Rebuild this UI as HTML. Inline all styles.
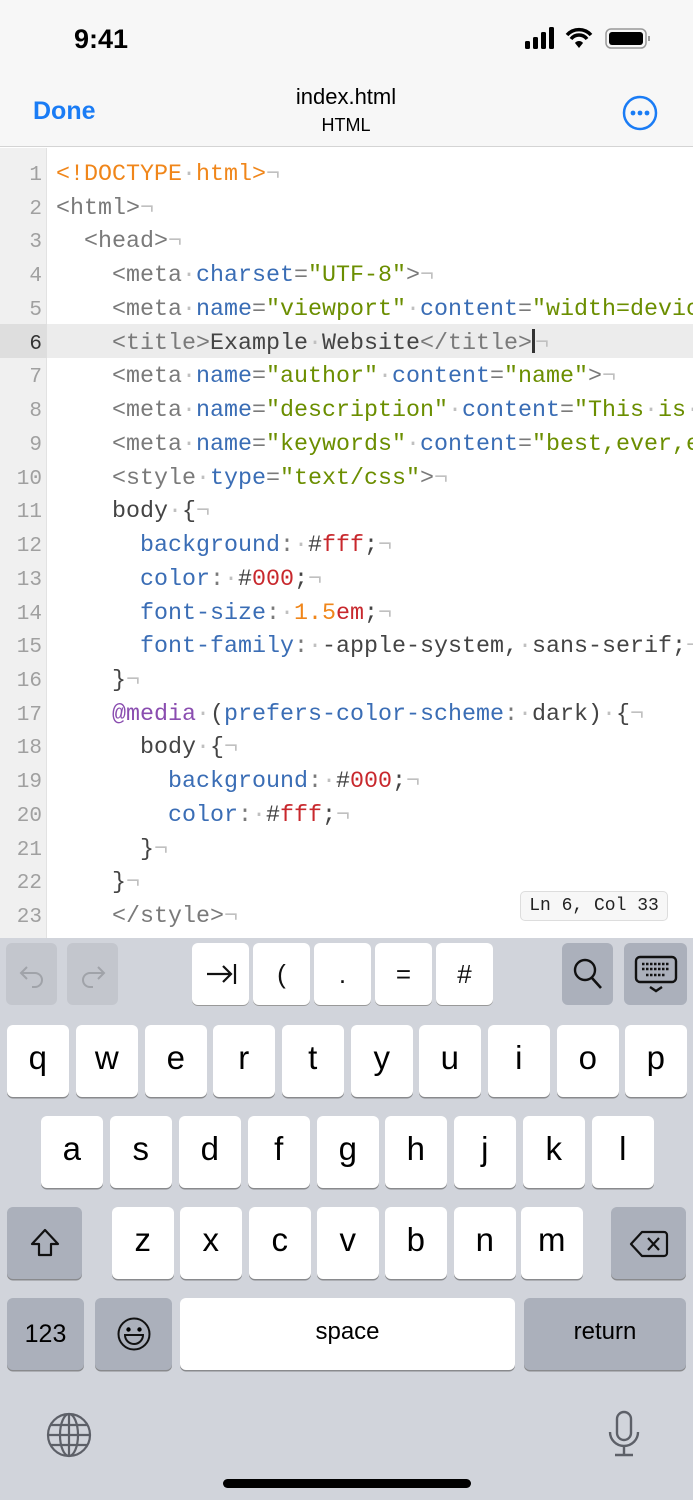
<!DOCTYPE html>
<html><head><meta charset="utf-8">
<style>
*{margin:0;padding:0;box-sizing:border-box}
body{width:693px;height:1500px;overflow:hidden;background:#fff;font-family:"Liberation Sans",sans-serif;position:relative}
.abs{position:absolute}
#top{left:0;top:0;width:693px;height:147px;background:#f7f7f7;border-bottom:1px solid #d4d4d4}
#gut{left:0;top:148px;width:47px;height:790px;background:#f0f0f0;border-right:1px solid #e2e2e2}
.cur{left:47px;top:324px;width:646px;height:34px;background:#ececec}
.curg{left:0;top:324px;width:47px;height:34px;background:#dedede}
.ln{position:absolute;left:0;width:42px;text-align:right;font-family:"Liberation Mono",monospace;font-size:21px;color:#a0a0a0;line-height:33.73px}
.code{position:absolute;left:56px;font-family:"Liberation Mono",monospace;font-size:23.33px;line-height:33.73px;white-space:pre;color:#7a7a7a}
.d{color:#c0c0c0}.n{color:#c0c0c0}
.a{color:#3a6db5}.s{color:#6b8e00}.o{color:#f0861a}.r{color:#c8282d}.p{color:#8a4db0}.k{color:#444}
#kb{left:0;top:938px;width:693px;height:562px;background:#d1d4db}
.key{position:absolute;background:#fff;border-radius:6px;box-shadow:0 1.5px 0 #898a8d;font-size:33px;color:#000;text-align:center;line-height:66px;height:72px;width:61.5px}
.key.g{background:#abb0bb}
.tb{position:absolute;top:943px;height:62px;width:57px;background:#fff;border-radius:6px;box-shadow:0 1px 0 #999;text-align:center;line-height:62px;font-size:26px;color:#111}
.tb.g{background:#abb0bb}
</style></head><body>
<div id="top" class="abs"></div>
<div class="abs" style="left:74px;top:24px;font-size:27px;font-weight:bold;color:#000">9:41</div>
<svg class="abs" style="left:520px;top:26px" width="135" height="26" viewBox="0 0 135 26">
<rect x="5" y="15" width="5" height="8" rx="1.5"/><rect x="13" y="11" width="5" height="12" rx="1.5"/><rect x="21" y="6" width="5" height="17" rx="1.5"/><rect x="29" y="1" width="5" height="22" rx="1.5"/>
<path d="M47 9 a16 16 0 0 1 24 0" stroke="#000" stroke-width="3.5" fill="none"/><path d="M51 13 a10 10 0 0 1 16 0" stroke="#000" stroke-width="3.5" fill="none"/><path d="M55 17 l4 5 l4 -5 a5 5 0 0 0 -8 0z"/>
<rect x="86" y="3" width="40" height="19" rx="5" fill="none" stroke="#999" stroke-width="1.5"/><rect x="89" y="6" width="34" height="13" rx="3"/><rect x="128" y="10" width="2" height="5" fill="#999"/>
</svg>
<div class="abs" style="left:33px;top:97px;font-size:25px;font-weight:bold;color:#1a7cf5">Done</div>
<div class="abs" style="left:246px;top:84px;width:200px;text-align:center;font-size:22px;color:#000">index.html</div>
<div class="abs" style="left:246px;top:115px;width:200px;text-align:center;font-size:18px;color:#000">HTML</div>
<svg class="abs" style="left:621px;top:94px" width="38" height="38"><circle cx="19" cy="19" r="16" fill="none" stroke="#1a7cf5" stroke-width="2.5"/><circle cx="12" cy="19" r="2.4" fill="#1a7cf5"/><circle cx="19" cy="19" r="2.4" fill="#1a7cf5"/><circle cx="26" cy="19" r="2.4" fill="#1a7cf5"/></svg>
<div id="gut" class="abs"></div>
<div class="abs cur"></div><div class="abs curg"></div>
<div class="abs" style="left:0;top:159px;width:693px;height:779px;overflow:hidden">
<div class="ln" style="top:0">1<br>2<br>3<br>4<br>5<br><span style="color:#333">6</span><br>7<br>8<br>9<br>10<br>11<br>12<br>13<br>14<br>15<br>16<br>17<br>18<br>19<br>20<br>21<br>22<br>23</div>
<div class="code" style="top:0"><span class="o">&lt;!DOCTYPE<span class="d">·</span>html&gt;</span><span class="n">¬</span>
&lt;html&gt;<span class="n">¬</span>
  &lt;head&gt;<span class="n">¬</span>
    &lt;meta<span class="d">·</span><span class="a">charset</span>=<span class="s">"UTF-8"</span>&gt;<span class="n">¬</span>
    &lt;meta<span class="d">·</span><span class="a">name</span>=<span class="s">"viewport"</span><span class="d">·</span><span class="a">content</span>=<span class="s">"width=device-width"</span>
    &lt;title&gt;<span class="k">Example<span class="d">·</span>Website</span>&lt;/title&gt;<span style="display:inline-block;width:3px;height:24px;background:#333;vertical-align:-4px"></span><span class="n">¬</span>
    &lt;meta<span class="d">·</span><span class="a">name</span>=<span class="s">"author"</span><span class="d">·</span><span class="a">content</span>=<span class="s">"name"</span>&gt;<span class="n">¬</span>
    &lt;meta<span class="d">·</span><span class="a">name</span>=<span class="s">"description"</span><span class="d">·</span><span class="a">content</span>=<span class="s">"This<span class="d">·</span>is<span class="d">·</span>a"</span>
    &lt;meta<span class="d">·</span><span class="a">name</span>=<span class="s">"keywords"</span><span class="d">·</span><span class="a">content</span>=<span class="s">"best,ever,example"</span>
    &lt;style<span class="d">·</span><span class="a">type</span>=<span class="s">"text/css"</span>&gt;<span class="n">¬</span>
    <span class="k">body</span><span class="d">·</span><span class="k">{</span><span class="n">¬</span>
      <span class="a">background</span>:<span class="d">·</span><span class="k">#</span><span class="r">fff</span><span class="k">;</span><span class="n">¬</span>
      <span class="a">color</span>:<span class="d">·</span><span class="k">#</span><span class="r">000</span><span class="k">;</span><span class="n">¬</span>
      <span class="a">font-size</span>:<span class="d">·</span><span class="o">1.5</span><span class="r">em</span><span class="k">;</span><span class="n">¬</span>
      <span class="a">font-family</span>:<span class="d">·</span><span class="k">-apple-system,</span><span class="d">·</span><span class="k">sans-serif;</span><span class="n">¬</span>
    <span class="k">}</span><span class="n">¬</span>
    <span class="p">@media</span><span class="d">·</span><span class="k">(</span><span class="a">prefers-color-scheme</span>:<span class="d">·</span><span class="k">dark)</span><span class="d">·</span><span class="k">{</span><span class="n">¬</span>
      <span class="k">body</span><span class="d">·</span><span class="k">{</span><span class="n">¬</span>
        <span class="a">background</span>:<span class="d">·</span><span class="k">#</span><span class="r">000</span><span class="k">;</span><span class="n">¬</span>
        <span class="a">color</span>:<span class="d">·</span><span class="k">#</span><span class="r">fff</span><span class="k">;</span><span class="n">¬</span>
      <span class="k">}</span><span class="n">¬</span>
    <span class="k">}</span><span class="n">¬</span>
    &lt;/style&gt;<span class="n">¬</span></div>
</div>
<div class="abs" style="left:520px;top:891px;width:148px;height:30px;background:#f7f7f7;border:1px solid #ddd;border-radius:5px;font-family:'Liberation Mono',monospace;font-size:18px;line-height:28px;text-align:center;color:#222">Ln 6, Col 33</div>
<div id="kb" class="abs"></div>
<div class="tb" style="left:6px;width:51px;background:#c3c6cd;box-shadow:none"><svg width="30" height="30" viewBox="0 0 30 30" style="margin-top:16px"><path d="M10 8 L4 14 L10 20 M4 14 H18 a7 7 0 0 1 0 14 H15" stroke="#a0a3a9" stroke-width="2" fill="none"/></svg></div>
<div class="tb" style="left:67px;width:51px;background:#c3c6cd;box-shadow:none"><svg width="30" height="30" viewBox="0 0 30 30" style="margin-top:16px"><path d="M20 8 L26 14 L20 20 M26 14 H12 a7 7 0 0 0 0 14 H15" stroke="#a0a3a9" stroke-width="2" fill="none"/></svg></div>
<div class="tb" style="left:192px"><svg width="34" height="30" viewBox="0 0 34 30" style="margin-top:16px"><path d="M3 15 H27 M19 7 L27 15 L19 23 M31 5 V25" stroke="#111" stroke-width="2.2" fill="none"/></svg></div>
<div class="tb" style="left:253px">(</div>
<div class="tb" style="left:314px">.</div>
<div class="tb" style="left:375px">=</div>
<div class="tb" style="left:436px">#</div>
<div class="tb g" style="left:562px;width:51px;box-shadow:none"><svg width="32" height="34" viewBox="0 0 32 34" style="margin-top:14px"><circle cx="13" cy="13" r="10" fill="none" stroke="#111" stroke-width="2.4"/><path d="M20 21 L29 31" stroke="#111" stroke-width="2.6"/></svg></div>
<div class="tb g" style="left:624px;width:63px;box-shadow:none"><svg width="46" height="40" viewBox="0 0 46 40" style="margin-top:12px"><rect x="3" y="2" width="40" height="25" rx="4" fill="none" stroke="#111" stroke-width="2.4"/><path d="M9 9h28M9 14h28M13 20h20" stroke="#111" stroke-width="2.6" stroke-dasharray="2.5 1.5"/><path d="M17 32 L23 36 L29 32" stroke="#111" stroke-width="2.4" fill="none"/></svg></div>
<div class="key" style="left:7px;top:1025px">q</div><div class="key" style="left:76px;top:1025px">w</div><div class="key" style="left:145px;top:1025px">e</div><div class="key" style="left:213px;top:1025px">r</div><div class="key" style="left:282px;top:1025px">t</div><div class="key" style="left:351px;top:1025px">y</div><div class="key" style="left:419px;top:1025px">u</div><div class="key" style="left:488px;top:1025px">i</div><div class="key" style="left:557px;top:1025px">o</div><div class="key" style="left:625px;top:1025px">p</div>
<div class="key" style="left:41px;top:1116px">a</div><div class="key" style="left:110px;top:1116px">s</div><div class="key" style="left:179px;top:1116px">d</div><div class="key" style="left:248px;top:1116px">f</div><div class="key" style="left:317px;top:1116px">g</div><div class="key" style="left:385px;top:1116px">h</div><div class="key" style="left:454px;top:1116px">j</div><div class="key" style="left:523px;top:1116px">k</div><div class="key" style="left:592px;top:1116px">l</div>
<div class="key g" style="left:7px;top:1207px;width:75px"><svg width="32" height="32" viewBox="0 0 32 32" style="margin-top:20px"><path d="M16 3 L29 17 H22 V28 H10 V17 H3 Z" fill="none" stroke="#111" stroke-width="2.2" stroke-linejoin="round"/></svg></div>
<div class="key" style="left:112px;top:1207px">z</div><div class="key" style="left:180px;top:1207px">x</div><div class="key" style="left:249px;top:1207px">c</div><div class="key" style="left:317px;top:1207px">v</div><div class="key" style="left:385px;top:1207px">b</div><div class="key" style="left:454px;top:1207px">n</div><div class="key" style="left:521px;top:1207px">m</div>
<div class="key g" style="left:611px;top:1207px;width:75px"><svg width="40" height="30" viewBox="0 0 40 30" style="margin-top:22px"><path d="M13 3 H35 a3 3 0 0 1 3 3 V24 a3 3 0 0 1 -3 3 H13 L2 15 Z" fill="none" stroke="#111" stroke-width="2.2" stroke-linejoin="round"/><path d="M19 9 L30 21 M30 9 L19 21" stroke="#111" stroke-width="2.2"/></svg></div>
<div class="key g" style="left:7px;top:1298px;width:77px;font-size:25px;line-height:72px">123</div>
<div class="key g" style="left:95px;top:1298px;width:77px"><svg width="36" height="36" viewBox="0 0 36 36" style="margin-top:18px"><circle cx="18" cy="18" r="15.5" fill="none" stroke="#111" stroke-width="2"/><circle cx="12.5" cy="13.5" r="2.2"/><circle cx="23.5" cy="13.5" r="2.2"/><path d="M9 19 H27 a9 9 0 0 1 -18 0z" fill="none" stroke="#111" stroke-width="2"/></svg></div>
<div class="key" style="left:180px;top:1298px;width:335px;font-size:24px;line-height:68px">space</div>
<div class="key g" style="left:524px;top:1298px;width:162px;font-size:24px;line-height:68px">return</div>
<svg class="abs" style="left:46px;top:1412px" width="46" height="46" viewBox="0 0 46 46"><g fill="none" stroke="#5d6068" stroke-width="2.2"><circle cx="23" cy="23" r="21"/><ellipse cx="23" cy="23" rx="9" ry="21"/><path d="M23 2V44M2 23H44M5 13H41M5 33H41"/></g></svg>
<svg class="abs" style="left:606px;top:1410px" width="36" height="48" viewBox="0 0 36 48"><g fill="none" stroke="#5d6068" stroke-width="2.4"><rect x="11" y="2" width="14" height="28" rx="7"/><path d="M4 22 a14 14 0 0 0 28 0 M18 36 V45 M9 45 H27"/></g></svg>
<div class="abs" style="left:223px;top:1479px;width:248px;height:9px;border-radius:5px;background:#000"></div>
</body></html>
